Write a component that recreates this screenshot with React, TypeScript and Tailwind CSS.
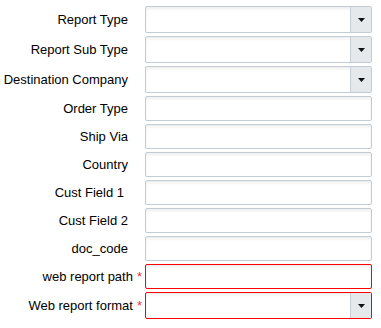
import React from 'react';

type Field = {
  label: string;
  kind: 'select' | 'text';
  required?: boolean;
  pad?: string;
};

const FIELDS: Field[] = [
  { label: 'Report Type', kind: 'select' },
  { label: 'Report Sub Type', kind: 'select' },
  { label: 'Destination Company', kind: 'select' },
  { label: 'Order Type', kind: 'text' },
  { label: 'Ship Via', kind: 'text' },
  { label: 'Country', kind: 'text' },
  { label: 'Cust Field 1', kind: 'text', pad: 'pr-[18px]' },
  { label: 'Cust Field 2', kind: 'text' },
  { label: 'doc_code', kind: 'text' },
  { label: 'web report path', kind: 'text', required: true },
  { label: 'Web report format', kind: 'select', required: true },
];

function Control({ field }: { field: Field }) {
  const border = field.required ? 'border-[#f00]' : 'border-[#c3ccd5]';
  if (field.kind === 'select') {
    return (
      <div className={`flex w-[227px] h-[27px] border ${border} rounded-[2px] bg-white shadow-[inset_0_2px_3px_rgba(0,0,0,0.07)]`}>
        <div className="flex-1" />
        <div className="w-[21px] flex items-center justify-center bg-[#e6e9ec] border-l border-[#c9d0d7]">
          <svg width="7" height="4" viewBox="0 0 7 4">
            <path d="M0 0h7L3.5 4z" fill="#111" />
          </svg>
        </div>
      </div>
    );
  }
  return (
    <div className={`w-[227px] h-[25px] border ${border} rounded-[2px] bg-white shadow-[inset_0_2px_3px_rgba(0,0,0,0.07)]`} />
  );
}

export default function App() {
  return (
    <div className="bg-white w-[381px] h-[328px] pt-[6px] font-['Liberation_Sans',Arial,sans-serif] text-[13px] text-[#000]">
      <div className="flex flex-col gap-[3px]">
        {FIELDS.map((f) => (
          <div key={f.label} className="flex items-center gap-[3px]">
            <div className={`w-[142px] text-right whitespace-nowrap ${f.required ? '' : f.pad ?? 'pr-[14px]'}`}>
              {f.label}
              {f.required && <span className="text-[#e33] ml-[4px]">*</span>}
            </div>
            <Control field={f} />
          </div>
        ))}
      </div>
    </div>
  );
}
